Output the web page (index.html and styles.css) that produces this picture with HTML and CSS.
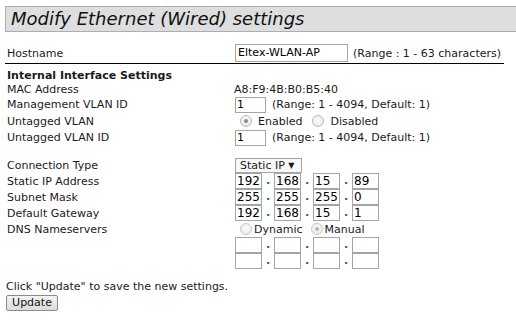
FILE: index.html
```html
<!DOCTYPE html>
<html>
<head>
<meta charset="utf-8">
<link rel="stylesheet" href="styles.css">
</head>
<body>
<div class="page">
  <div class="title">Modify Ethernet (Wired) settings</div>
  <div class="form">
    <div class="row r-host">
      <div class="lbl">Hostname</div>
      <div class="val"><span class="inp w-host">Eltex-WLAN-AP</span><span class="note n-host">(Range : 1 - 63 characters)</span></div>
    </div>
    <div class="row r-head"><div class="head">Internal Interface Settings</div></div>
    <div class="row r-14">
      <div class="lbl">MAC Address</div>
      <div class="val">A8:F9:4B:B0:B5:40</div>
    </div>
    <div class="row r-17">
      <div class="lbl">Management VLAN ID</div>
      <div class="val"><span class="inp w-vlan">1</span><span class="note">(Range: 1 - 4094, Default: 1)</span></div>
    </div>
    <div class="row r-16">
      <div class="lbl">Untagged VLAN</div>
      <div class="val"><span class="radio on"></span><span class="rtext">Enabled</span><span class="radio r2"></span><span class="rtext">Disabled</span></div>
    </div>
    <div class="row r-17">
      <div class="lbl">Untagged VLAN ID</div>
      <div class="val"><span class="inp w-vlan">1</span><span class="note">(Range: 1 - 4094, Default: 1)</span></div>
    </div>
    <div class="row r-sel">
      <div class="lbl">Connection Type</div>
      <div class="val"><span class="select">Static IP <span class="arrow">▼</span></span></div>
    </div>
    <div class="row r-ip">
      <div class="lbl">Static IP Address</div>
      <div class="val ip"><span class="inp oct">192</span><span class="dot">.</span><span class="inp oct">168</span><span class="dot">.</span><span class="inp oct">15</span><span class="dot">.</span><span class="inp oct">89</span></div>
    </div>
    <div class="row r-ip">
      <div class="lbl">Subnet Mask</div>
      <div class="val ip"><span class="inp oct">255</span><span class="dot">.</span><span class="inp oct">255</span><span class="dot">.</span><span class="inp oct">255</span><span class="dot">.</span><span class="inp oct">0</span></div>
    </div>
    <div class="row r-ip">
      <div class="lbl">Default Gateway</div>
      <div class="val ip"><span class="inp oct">192</span><span class="dot">.</span><span class="inp oct">168</span><span class="dot">.</span><span class="inp oct">15</span><span class="dot">.</span><span class="inp oct">1</span></div>
    </div>
    <div class="row r-dns">
      <div class="lbl">DNS Nameservers</div>
      <div class="val"><span class="radio dis"></span><span class="rtext t-dyn">Dynamic</span><span class="radio dis on r3"></span><span class="rtext t-man">Manual</span></div>
    </div>
    <div class="row r-ip">
      <div class="lbl"></div>
      <div class="val ip"><span class="inp oct"></span><span class="dot">.</span><span class="inp oct"></span><span class="dot">.</span><span class="inp oct"></span><span class="dot">.</span><span class="inp oct"></span></div>
    </div>
    <div class="row r-ip">
      <div class="lbl"></div>
      <div class="val ip"><span class="inp oct"></span><span class="dot">.</span><span class="inp oct"></span><span class="dot">.</span><span class="inp oct"></span><span class="dot">.</span><span class="inp oct"></span></div>
    </div>
  </div>
  <div class="hint">Click "Update" to save the new settings.</div>
  <div class="btnrow"><span class="btn">Update</span></div>
</div>
</body>
</html>
```
FILE: styles.css
```css
html, body {
  margin: 0;
  padding: 0;
  background: #fff;
}
body {
  font-family: "DejaVu Sans", Verdana, sans-serif;
  font-size: 11px;
  color: #1a1a1a;
}
.page {
  padding: 6px 0 0 5px;
}
.title {
  height: 24px;
  line-height: 24px;
  background: #dedede;
  border: 1px solid #a9adb8;
  border-right: none;
  font-style: italic;
  font-size: 18px;
  color: #111;
  padding-left: 5px;
}
.form {
  width: 499px;
  margin-top: 11px;
}
.row {
  display: flex;
  align-items: center;
}
.lbl {
  width: 229px;
  padding-left: 2px;
  box-sizing: border-box;
  flex: none;
}
.val {
  display: flex;
  align-items: center;
  white-space: nowrap;
}
.r-host {
  height: 20px;
  border-bottom: 1px solid #000;
  margin-bottom: 4px;
}
.r-head { height: 14px; }
.head {
  font-weight: bold;
  padding-left: 2px;
}
.r-14 { height: 14px; }
.r-16 { height: 16px; }
.r-17 { height: 17px; }
.r-sel {
  height: 15px;
  margin-top: 12px;
}
.r-ip { height: 16px; }
.r-dns { height: 16px; }
.inp {
  display: inline-block;
  box-sizing: border-box;
  border: 1px solid #a5a5a5;
  background: #fff;
  color: #000;
  padding: 0 2px;
  line-height: 14px;
  height: 16px;
}
.w-host {
  width: 113px;
  height: 18px;
  line-height: 16px;
  margin-left: 1px;
}
.note { margin-left: 6px; }
.n-host { margin-left: 5px; }
.w-vlan {
  width: 31px;
  height: 16px;
  margin-left: 1px;
  padding-left: 1px;
}
.oct {
  width: 27px;
  padding-left: 1px;
  font-size: 12px;
}
.ip .inp:first-child { margin-left: 1px; }
.dot {
  width: 12px;
  text-align: center;
  color: #1b5e8c;
  font-weight: bold;
  line-height: 14px;
}
.radio {
  display: inline-block;
  width: 10px;
  height: 10px;
  border: 1px solid #b8b8b8;
  border-radius: 50%;
  background: radial-gradient(circle at 50% 40%, #fdfdfd 0%, #e4e4e4 100%);
  margin-left: 6px;
  position: relative;
  flex: none;
}
.radio.on::after {
  content: "";
  position: absolute;
  left: 3px;
  top: 3px;
  width: 4px;
  height: 4px;
  border-radius: 50%;
  background: #8a8a8a;
}
.radio.dis { border-color: #c8c8c8; }
.radio.dis.on::after { background: #b5b5b5; }
.radio.r2 { margin-left: 10px; }
.radio.r3 { margin-left: 8px; }
.rtext { margin-left: 6px; }
.t-dyn { margin-left: 2px; }
.t-man { margin-left: 2px; }
.select {
  display: inline-block;
  box-sizing: border-box;
  width: 67px;
  height: 15px;
  line-height: 13px;
  border: 1px solid #a5a5a5;
  background: #f9f9f9;
  padding-left: 4px;
  margin-left: 1px;
}
.arrow {
  font-size: 8px;
  vertical-align: 1px;
}
.hint {
  margin-top: 11px;
  height: 14px;
  line-height: 14px;
  padding-left: 1px;
}
.btnrow {
  margin-top: 1px;
  padding-left: 1px;
}
.btn {
  display: inline-block;
  box-sizing: border-box;
  width: 52px;
  height: 16px;
  line-height: 14px;
  border: 1px solid #8c8c8c;
  border-radius: 2px;
  background: linear-gradient(#f4f4f4, #dcdcdc);
  text-align: center;
  color: #111;
}
```
